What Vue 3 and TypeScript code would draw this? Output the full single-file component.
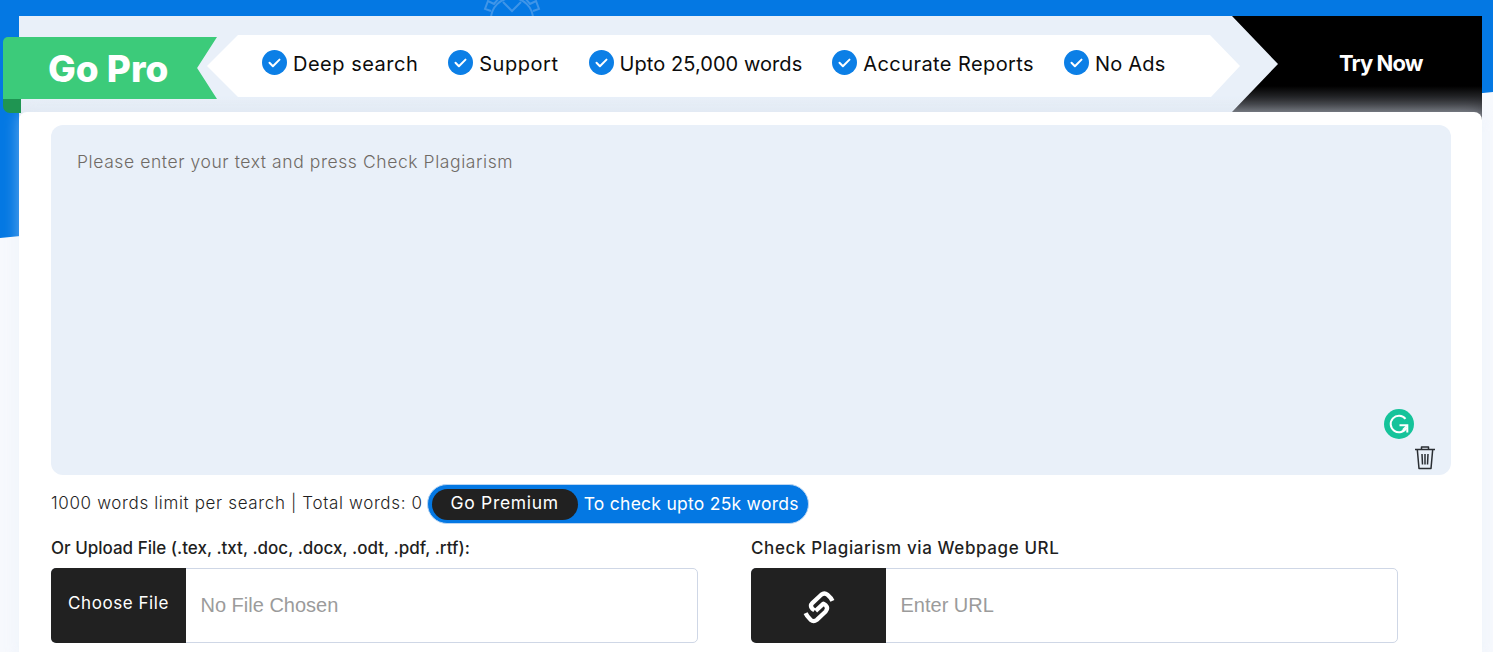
<script setup lang="ts">
interface Perk { label: string; spacing: number }
const perks: Perk[] = [
  { label: 'Deep search', spacing: 0.5 },
  { label: 'Support', spacing: 0.55 },
  { label: 'Upto 25,000 words', spacing: 0.06 },
  { label: 'Accurate Reports', spacing: 0.42 },
  { label: 'No Ads', spacing: 0.17 },
]
</script>

<template>
  <div class="page">
    <svg class="sky" viewBox="0 0 1493 240" preserveAspectRatio="none" aria-hidden="true">
      <path d="M0 0H1493V92L0 238Z" fill="#0478e3" />
    </svg>
    <svg class="gear" viewBox="0 0 60 60" aria-hidden="true">
      <g fill="none" stroke="#3f95e8" stroke-width="2">
        <circle cx="30" cy="30" r="21" />
        <path d="M9 22l-6-2 3-8 6 3 5-6-3-6 8-3 2 6h12l2-6 8 3-3 6 5 6 6-3 3 8-6 2" />
        <path d="M21 13l9 9 9-9" />
      </g>
    </svg>

    <main class="panel">
      <section class="promo">
        <div class="ribbon-wrap">
          <div class="ribbon">Go Pro</div>
          <div class="fold"></div>
        </div>
        <div class="perks">
          <span v-for="perk in perks" :key="perk.label" class="perk" :style="{ letterSpacing: perk.spacing + 'px' }">
            <svg class="tick" viewBox="0 0 25 25" aria-hidden="true">
              <circle cx="12.5" cy="12.5" r="12.5" fill="#0c7fe6" />
              <path d="M7.5 12.8l3.4 3.4 6.6-6.6" fill="none" stroke="#fff" stroke-width="2" stroke-linecap="round" stroke-linejoin="round" />
            </svg>
            {{ perk.label }}
          </span>
        </div>
        <div class="try">Try Now</div>
      </section>

      <section class="card">
        <div class="editor">
          <span class="placeholder">Please enter your text and press Check Plagiarism</span>
          <span class="grammarly">
            <svg viewBox="0 0 30 30" aria-hidden="true">
              <circle cx="15" cy="15" r="15" fill="#15c39a" />
              <path d="M21.5 9.800A8.300 8.300 0 1 0 22.500 18.500" fill="none" stroke="#fff" stroke-width="2" />
              <path d="M15.500 16.200H23.300V23.500" fill="none" stroke="#fff" stroke-width="2" />
              <path d="M22.800 16.700L18.800 20.800" fill="none" stroke="#fff" stroke-width="1.500" />
            </svg>
          </span>
          <svg class="trash" viewBox="0 0 22 26" aria-hidden="true">
            <g fill="none" stroke="#2a2e33" stroke-width="1.5" stroke-linejoin="round">
              <path d="M1 4.5H21" />
              <path d="M7.5 4.5V2H14.500V4.5" />
              <path d="M3.300 4.500L5 23.500H17L18.700 4.500" />
              <path d="M8 9L8.500 19.500M11 9V19.500M14 9L13.500 19.500" />
            </g>
          </svg>
        </div>

        <div class="limit">
          <span class="limit-text">1000 words limit per search | Total words: 0</span>
          <span class="premium">
            <span class="premium-btn">Go Premium</span>
            <span class="premium-note">To check upto 25k words</span>
          </span>
        </div>

        <div class="fields">
          <div class="field">
            <label class="label">Or Upload File (.tex, .txt, .doc, .docx, .odt, .pdf, .rtf):</label>
            <div class="control">
              <span class="addon">Choose File</span>
              <span class="ghost">No File Chosen</span>
            </div>
          </div>
          <div class="field">
            <label class="label label-wide">Check Plagiarism via Webpage URL</label>
            <div class="control">
              <span class="addon">
                <svg class="link" viewBox="0 0 32 34" aria-hidden="true">
                  <g fill="none" stroke="#fff" stroke-width="3.800" stroke-linejoin="round">
                    <path d="M28 11.500Q27 9 23.500 6Q20.800 3.800 18 6L10 13.500Q7.500 16 10 18.500L12 20" />
                    <path d="M4 22.500Q5 25 8.500 28.500Q11.200 30.700 14 28.500L22 21Q24.500 18 22 15.500L20 14L13 20.500" />
                  </g>
                </svg>
              </span>
              <span class="ghost">Enter URL</span>
            </div>
          </div>
        </div>
      </section>
    </main>
  </div>
</template>

<style>
html, body { margin: 0; background: #fff; overflow: hidden; }
</style>

<style scoped>
.page {
  position: relative;
  box-sizing: border-box;
  width: 1493px;
  height: 652px;
  padding: 16px 11px 0 19px;
  overflow: hidden;
  background: #f7f9fd;
  font-family: Inter, "Liberation Sans", sans-serif;
}
.sky { position: absolute; left: 0; top: 0; width: 1493px; height: 240px; }
.gear { position: absolute; left: 482px; top: -11px; width: 60px; height: 60px; }
.panel { position: relative; height: 100%; background: #fff; }
.promo {
  position: relative;
  display: flex;
  height: 104px;
  margin-bottom: -8px;
  background: linear-gradient(#e9f0f9 81px, #e3eaf3 96px);
}
.ribbon-wrap { position: relative; z-index: 2; flex: none; width: 214px; margin-left: -16px; padding-top: 21px; }
.ribbon {
  height: 62px;
  padding-left: 45px;
  line-height: 64px;
  font-size: 37px;
  font-weight: 800;
  color: #fff;
  background: #3ccb7a;
  border-top-left-radius: 5px;
  clip-path: polygon(0 0, 100% 0, 90.700% 50%, 100% 100%, 0 100%);
}
.fold { width: 18px; height: 14px; background: #1f9552; border-radius: 0 0 0 7px; }
.perks {
  flex: none;
  display: flex;
  align-items: center;
  box-sizing: border-box;
  width: 1033px;
  height: 62px;
  margin: 19px 0 0 -10px;
  padding: 0 0 4px 55px;
  gap: 30px;
  background: #fff;
  clip-path: polygon(0 50%, 31px 0, 1003px 0, 1033px 50%, 1004px 100%, 31px 100%);
}
.perk { display: inline-flex; align-items: center; gap: 6px; font-size: 20px; color: #0c0c0c; white-space: nowrap; }
.tick { width: 25px; height: 25px; margin-top: -3px; }
.try {
  position: absolute;
  right: 0;
  top: 0;
  box-sizing: border-box;
  width: 250px;
  height: 104px;
  padding: 34px 0 0 107px;
  font-size: 22px;
  font-weight: 700;
  letter-spacing: -0.9px;
  color: #fff;
  background: linear-gradient(#000 70px, #5a5c63 98px);
  clip-path: polygon(0 0, 100% 0, 100% 104px, 0 104px, 0 96px, 46px 48px);
}
.card {
  position: relative;
  z-index: 1;
  height: 548px;
  box-sizing: border-box;
  padding: 13px 31px 0 32px;
  background: #fff;
  border-radius: 8px 8px 0 0;
  box-shadow: 0 0 16px rgba(225, 234, 248, 0.45);
}
.editor {
  position: relative;
  box-sizing: border-box;
  height: 350px;
  padding: 26px;
  background: #e9f0f9;
  border-radius: 12px;
}
.placeholder { font-size: 17.500px; font-weight: 300; letter-spacing: 0.58px; line-height: 22px; color: #6f6a65; }
.grammarly { position: absolute; right: 37px; bottom: 36px; width: 30px; height: 30px; }
.grammarly svg { display: block; width: 30px; height: 30px; }
.trash { position: absolute; right: 15px; bottom: 4px; width: 22px; height: 26px; }
.limit { display: flex; align-items: center; gap: 4px; margin-top: 9px; height: 40px; }
.limit-text { font-size: 17px; font-weight: 300; letter-spacing: 0.64px; color: #1f1f1f; white-space: nowrap; padding-bottom: 2px; }
.premium {
  display: inline-flex;
  align-items: center;
  box-sizing: border-box;
  height: 40px;
  padding: 0 9px 0 4px;
  background: #0478e3;
  border: 1px solid #bcd6f2;
  border-radius: 20px;
  color: #fff;
  font-size: 17.500px;
  white-space: nowrap;
}
.premium-btn {
  display: inline-flex;
  align-items: center;
  justify-content: center;
  box-sizing: border-box;
  width: 146px;
  height: 31px;
  margin-right: 6px;
  padding-bottom: 3px;
  letter-spacing: 0.7px;
  background: #212121;
  border-radius: 16px;
}
.premium-note { letter-spacing: 0.26px; padding-bottom: 2px; }
.fields { display: flex; gap: 53px; margin-top: 13px; }
.field { width: 647px; flex: none; }
.label { display: block; height: 23px; line-height: 23px; font-size: 17px; font-weight: 500; color: #1f1f1f; white-space: nowrap; margin-bottom: 8px; }
.label-wide { letter-spacing: 0.6px; }
.control {
  display: flex;
  align-items: stretch;
  box-sizing: border-box;
  height: 75px;
  background: #fff;
  border: 1px solid #cfd7e6;
  border-radius: 5px;
}
.addon {
  display: flex;
  align-items: center;
  justify-content: center;
  width: 135px;
  margin: -1px 0 -1px -1px;
  padding-bottom: 6px;
  box-sizing: border-box;
  color: #fff;
  font-size: 17px;
  letter-spacing: 0.55px;
  background: #212121;
  border-radius: 5px 0 0 5px;
}
.link { width: 36px; height: 38px; margin-top: 9px; }
.ghost {
  display: flex;
  align-items: center;
  padding-left: 14.500px;
  font-family: "Liberation Sans", Arial, sans-serif;
  font-size: 20px;
  color: #9b9b9b;
}
</style>
